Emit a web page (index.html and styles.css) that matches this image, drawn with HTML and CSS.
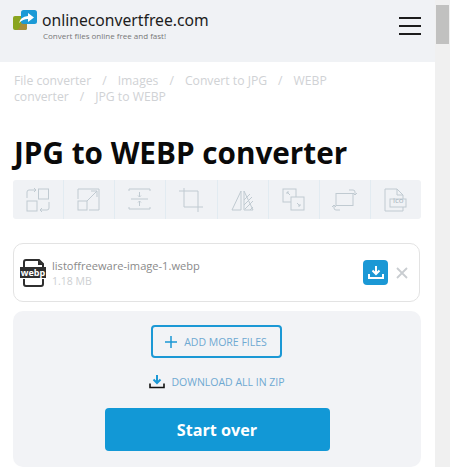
FILE: index.html
```html
<!DOCTYPE html>
<html lang="en">
<head>
  <meta charset="UTF-8" />
  <title>JPG to WEBP converter</title>
  <link rel="stylesheet" href="styles.css">
</head>
<body>
  <div class="page">
    <div class="main">
      <!-- Header -->
      <header class="header">
        <svg class="logo" width="24" height="20" viewBox="0 0 24 20">
          <rect x="0" y="6" width="14" height="14" rx="2" fill="#8aa51f"/>
          <path d="M8 12 h6 v6 a2 2 0 0 1 -2 2 h-8 q4 -3 4 -8z" fill="#a88c3a"/>
          <rect x="8" y="0" width="16" height="14" rx="2.500" fill="#1b9ad6"/>
          <path d="M6 13 q1 -6 9 -7 v-3 l6 4.500 -6 4.500 v-3 q-5 0 -9 4z" fill="#fff"/>
        </svg>
        <div class="brand">
          <div class="brand-name">onlineconvertfree.com</div>
          <div class="brand-tag">Convert files online free and fast!</div>
        </div>
        <div class="burger"><span></span><span></span><span></span></div>
      </header>

      <div class="content">
        <nav class="crumbs">
          <a>File converter</a><i>/</i><a>Images</a><i>/</i><a>Convert to JPG</a><i>/</i><a>WEBP</a><a>converter</a><i>/</i><a>JPG to WEBP</a>
        </nav>

        <h1>JPG to WEBP converter</h1>

        <!-- Tools -->
        <div class="tools">
          <div class="tool">
            <svg width="24" height="24" viewBox="0 0 24 24">
              <rect x="12.500" y="1" width="10" height="10"/><rect x="1" y="13" width="10" height="10"/>
              <path d="M1 10 V4 a2 2 0 0 1 2 -2 h7 M8 0 l2 2 -2 2 M23 14 v6 a2 2 0 0 1 -2 2 h-7 M16 20 l-2 2 2 2"/>
            </svg>
          </div>
          <div class="tool">
            <svg width="24" height="24" viewBox="0 0 24 24">
              <path d="M1 11 V1 h21 v21 H12"/><rect x="1" y="13" width="9" height="9"/>
              <path d="M10 13 L20 3 M14 3 h6 v6"/>
            </svg>
          </div>
          <div class="tool">
            <svg width="24" height="24" viewBox="0 0 24 24">
              <path d="M1 3 V1 h21 v2 M1 19 v2 h21 v-2 M3 11 h17 M11.500 4 v5 M10 7.500 l1.500 1.500 1.500 -1.500 M11.500 18 v-5 M10 14.500 l1.500 -1.500 1.500 1.500"/>
            </svg>
          </div>
          <div class="tool">
            <svg width="24" height="24" viewBox="0 0 24 24">
              <path d="M0 3 H19 V24 M5 0 V19 H24"/>
            </svg>
          </div>
          <div class="tool">
            <svg width="24" height="24" viewBox="0 0 24 24">
              <path d="M10 3 L1 22 h9z M13 3 l9 19 h-9z M13 12 l6 -6 M13 17 l8 -8 M14 21 l8 -8 M19 22 l3 -3"/>
            </svg>
          </div>
          <div class="tool">
            <svg width="24" height="24" viewBox="0 0 24 24">
              <rect x="1" y="1" width="13" height="13"/><rect x="9" y="9" width="13" height="13" class="tool-fill"/>
              <path d="M5 4 l3 3 M5 4 h2 M5 4 v2 M18 18 l-3 -3 M18 18 h-2 M18 18 v-2"/>
            </svg>
          </div>
          <div class="tool">
            <svg width="24" height="24" viewBox="0 0 24 24">
              <rect x="3" y="5.500" width="17" height="12"/>
              <path d="M16 2 h4 a2 2 0 0 1 2 2 v3 M20 5 l2 2 2 -2 M7 22 h-4 a2 2 0 0 1 -2 -2 v-3 M-1 19 l2 -2 2 2"/>
            </svg>
          </div>
          <div class="tool">
            <svg width="24" height="24" viewBox="0 0 24 24">
              <path d="M1 1 h12 l6 6 v4 M1 1 v22 h18 v-4 M13 1 v6 h6"/>
              <rect x="6" y="11" width="16" height="8" class="tool-fill"/>
            </svg>
            <span class="ico-label">ico</span>
          </div>
        </div>

        <!-- File row -->
        <div class="file">
          <div class="file-icon">
            <svg width="26" height="28" viewBox="0 0 26 28">
              <path d="M4 8 V3 a2 2 0 0 1 2 -2 h13 l4 4 v3 M4 20 v5 a2 2 0 0 0 2 2 h15 a2 2 0 0 0 2 -2 v-5" fill="none" stroke="#2f2f2f" stroke-width="2"/>
              <path d="M18 1 v5 h5z" fill="#2f2f2f"/>
            </svg>
            <span class="file-badge">webp</span>
          </div>
          <div class="file-info">
            <div class="file-name">listoffreeware-image-1.webp</div>
            <div class="file-size">1.18 MB</div>
          </div>
          <div class="file-dl">
            <svg width="16" height="14" viewBox="0 0 16 14">
              <path d="M8 0 v7 M4.500 4.500 L8 8 l3.500 -3.500" fill="none" stroke="#fff" stroke-width="2"/>
              <path d="M1 8 v4 h14 v-4" fill="none" stroke="#fff" stroke-width="2"/>
            </svg>
          </div>
          <svg class="file-x" width="12" height="12" viewBox="0 0 12 12">
            <path d="M1 1 L11 11 M11 1 L1 11" stroke="#c9cdd1" stroke-width="1.800"/>
          </svg>
        </div>

        <!-- Actions -->
        <div class="panel">
          <a class="add-more">
            <svg width="12" height="12" viewBox="0 0 12 12"><path d="M6 0 V12 M0 6 H12" stroke="#1b98d5" stroke-width="1.500"/></svg>
            ADD MORE FILES
          </a>
          <a class="zip">
            <svg width="16" height="14" viewBox="0 0 16 14">
              <path d="M8 0 v7 M4.500 4.500 L8 8 l3.500 -3.500" fill="none" stroke="#1b98d5" stroke-width="2"/>
              <path d="M1 8.500 v4 h14 v-4" fill="none" stroke="#111" stroke-width="1.600"/>
            </svg>
            DOWNLOAD ALL IN ZIP
          </a>
          <a class="start">Start over</a>
        </div>
      </div>
    </div>
    <div class="scrollbar"><div class="thumb"></div></div>
  </div>
</body>
</html>
```

FILE: styles.css
```css
* { box-sizing: border-box; }

html, body {
  height: 100%;
  margin: 0;
  overflow: hidden;
}

body {
  font-family: "Open Sans", Arial, sans-serif;
  background-color: white;
}

.page {
  display: flex;
  height: 467px;
}

.main {
  width: 435px;
  flex: none;
}

.scrollbar {
  flex: 1;
  background-color: #f0f0f0;
  padding: 5px 1px 0;
}

.thumb {
  height: 39px;
  background-color: #c1c1c0;
}

.header {
  display: flex;
  align-items: flex-start;
  height: 62px;
  padding: 10px 14px 0 13px;
  background-color: #f0f2f5;
}

.logo {
  flex: none;
  margin-right: 5px;
}

.brand-name {
  font-family: "Noto Sans", sans-serif;
  font-size: 15.700px;
  line-height: 20px;
  color: #1c1c1c;
}

.brand-tag {
  margin-top: 1px;
  margin-left: 1px;
  font-size: 8px;
  line-height: 10px;
  color: #777;
}

.burger {
  margin-left: auto;
  margin-top: 7px;
  width: 22px;
  display: flex;
  flex-direction: column;
  gap: 6px;
}

.burger span {
  height: 2px;
  background-color: #1c1c1c;
}

.content {
  padding: 11px 14px 0 13px;
}

.crumbs {
  display: flex;
  flex-wrap: wrap;
  padding-left: 1px;
  padding-right: 60px;
  font-size: 12.200px;
  line-height: 16px;
  color: #d0d2d5;
}

.crumbs i {
  font-style: normal;
  margin: 0 11px;
}

h1 {
  margin: 28px 0 0;
  padding-left: 1px;
  font-size: 29.700px;
  line-height: 40px;
  font-weight: 700;
  color: #0a0a0a;
}

.tools {
  display: flex;
  height: 39px;
  margin-top: 7px;
  background-color: #f0f2f5;
  border-radius: 3px;
}

.tool {
  position: relative;
  flex: 1;
  display: flex;
  align-items: center;
  justify-content: center;
  border-right: 1px solid #e2ebf1;
}

.tool:last-child {
  border-right: none;
}

.tool svg {
  overflow: visible;
  fill: none;
  stroke: #c0cad1;
  stroke-width: 1;
}

.tool .tool-fill {
  fill: #f0f2f5;
}

.ico-label {
  position: absolute;
  left: 50%;
  top: 14px;
  margin-left: -3px;
  font-size: 8px;
  line-height: 11px;
  color: #a9b5be;
}

.file {
  display: flex;
  align-items: center;
  height: 59px;
  margin-top: 24px;
  margin-right: 1px;
  padding: 0 11px 0 6px;
  background-color: white;
  border: 1px solid #e3e3e3;
  border-radius: 10px;
}

.file-icon {
  position: relative;
  flex: none;
  width: 26px;
  height: 28px;
  margin-right: 6px;
}

.file-badge {
  position: absolute;
  left: 0;
  top: 8px;
  width: 26px;
  height: 11px;
  background-color: #2f2f2f;
  color: white;
  font-size: 9px;
  font-weight: 700;
  line-height: 11px;
  text-align: center;
}

.file-info {
  flex: 1;
  padding-top: 1px;
}

.file-name {
  font-size: 11.100px;
  line-height: 16px;
  color: #8a8a8a;
}

.file-size {
  font-size: 10.500px;
  line-height: 14px;
  color: #cdcfd2;
}

.file-dl {
  display: flex;
  align-items: center;
  justify-content: center;
  width: 25px;
  height: 25px;
  margin-right: 8px;
  background-color: #1b98d5;
  border-radius: 4px;
}

.panel {
  display: flex;
  flex-direction: column;
  align-items: center;
  margin-top: 9px;
  height: 156px;
  padding-top: 14px;
  background-color: #f2f3f6;
  border-radius: 10px;
}

.add-more {
  display: flex;
  align-items: center;
  justify-content: center;
  gap: 7px;
  width: 131px;
  height: 33px;
  margin-right: 2px;
  border: 2px solid #1b98d5;
  border-radius: 4px;
  font-size: 10.500px;
  color: #6fa9d2;
}

.zip {
  display: flex;
  align-items: center;
  gap: 6px;
  margin-top: 16px;
  height: 16px;
  font-size: 10.500px;
  color: #6fa9d2;
}

.start {
  display: flex;
  align-items: center;
  justify-content: center;
  width: 225px;
  height: 43px;
  margin-top: 18px;
  background-color: #1298d6;
  border-radius: 4px;
  font-size: 16.200px;
  font-weight: 700;
  color: white;
}
```
